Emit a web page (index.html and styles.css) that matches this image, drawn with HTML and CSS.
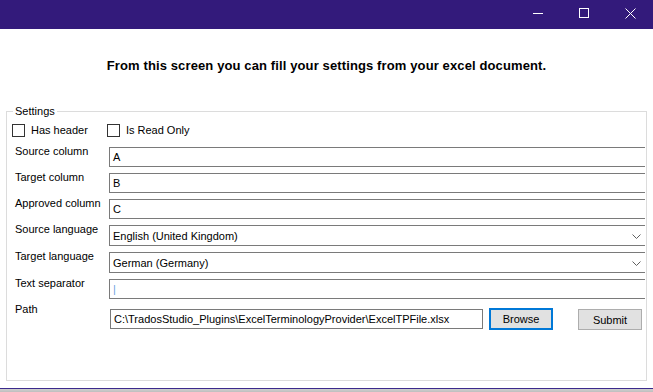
FILE: index.html
```html
<!DOCTYPE html>
<html>
<head>
<meta charset="utf-8">
<link rel="stylesheet" href="styles.css">
</head>
<body>
<div class="window">
  <div class="titlebar">
    <div class="cap-btn">
      <svg width="10" height="10" viewBox="0 0 10 10"><line x1="0" y1="5.5" x2="10" y2="5.5" stroke="#fff" stroke-width="1"/></svg>
    </div>
    <div class="cap-btn">
      <svg width="10" height="10" viewBox="0 0 10 10"><rect x="0.5" y="0.5" width="9" height="9" fill="none" stroke="#fff" stroke-width="1"/></svg>
    </div>
    <div class="cap-btn">
      <svg width="11" height="11" viewBox="0 0 11 11"><path d="M0.5 0.5 L10.5 10.5 M10.5 0.5 L0.5 10.5" stroke="#fff" stroke-width="1" fill="none"/></svg>
    </div>
  </div>
  <main class="content">
    <h1 class="heading">From this screen you can fill your settings from your excel document.</h1>
    <fieldset class="group">
      <legend class="legend">Settings</legend>
      <div class="checks">
        <label class="check"><span class="box"></span><span>Has header</span></label>
        <label class="check check-second"><span class="box"></span><span>Is Read Only</span></label>
      </div>
      <div class="row">
        <span class="label">Source column</span>
        <div class="field">A</div>
      </div>
      <div class="row">
        <span class="label">Target column</span>
        <div class="field">B</div>
      </div>
      <div class="row">
        <span class="label">Approved column</span>
        <div class="field">C</div>
      </div>
      <div class="row">
        <span class="label">Source language</span>
        <div class="field combo"><span>English (United Kingdom)</span>
          <svg class="chev" width="9" height="5" viewBox="0 0 9 5"><path d="M0.5 0.5 L4.5 4.5 L8.5 0.5" stroke="#606060" fill="none" stroke-width="1"/></svg>
        </div>
      </div>
      <div class="row">
        <span class="label">Target language</span>
        <div class="field combo"><span>German (Germany)</span>
          <svg class="chev" width="9" height="5" viewBox="0 0 9 5"><path d="M0.5 0.5 L4.5 4.5 L8.5 0.5" stroke="#606060" fill="none" stroke-width="1"/></svg>
        </div>
      </div>
      <div class="row">
        <span class="label">Text separator</span>
        <div class="field"><span class="sep">|</span></div>
      </div>
      <div class="row row-path">
        <span class="label label-path">Path</span>
        <div class="path">C:\TradosStudio_Plugins\ExcelTerminologyProvider\ExcelTPFile.xlsx</div>
        <button class="btn btn-focus">Browse</button>
        <button class="btn btn-submit">Submit</button>
      </div>
    </fieldset>
  </main>
  <div class="taskbar"></div>
</div>
</body>
</html>
```
FILE: styles.css
```css
* { box-sizing: border-box; }
html, body { margin: 0; padding: 0; background: #fff; }
body {
  font-family: "Liberation Sans", Arial, sans-serif;
  font-size: 11px;
  color: #000;
}
.window {
  width: 653px;
  height: 392px;
  display: flex;
  flex-direction: column;
  overflow: hidden;
}
.titlebar {
  height: 29px;
  flex: none;
  background: #331a7b;
  display: flex;
  justify-content: flex-end;
}
.cap-btn {
  width: 46px;
  height: 29px;
  display: flex;
  justify-content: center;
  align-items: flex-start;
  padding-top: 8px;
}
.cap-btn svg { display: block; }
.content {
  flex: 1;
  display: flex;
  flex-direction: column;
}
.heading {
  margin: 29px 0 0;
  font-size: 13px;
  line-height: 16px;
  font-weight: bold;
  text-align: center;
  letter-spacing: 0.12px;
}
.group {
  margin: 31px 6px 0 6px;
  border: 1px solid #dcdcdc;
  padding: 0 1px 50px 8px;
  min-width: 0;
}
.legend {
  margin-left: -2px;
  padding: 0 2px;
  font-size: 11px;
  line-height: 12px;
}
.checks {
  display: flex;
  align-items: center;
  margin-top: 7px;
  margin-left: -3px;
  height: 13px;
}
.check {
  display: flex;
  align-items: center;
  gap: 6px;
  font-size: 11px;
  line-height: 13px;
}
.check-second { margin-left: 19px; }
.box {
  width: 13px;
  height: 13px;
  border: 1px solid #333;
  background: #fff;
  display: block;
}
.row {
  display: flex;
  align-items: flex-start;
  margin-top: 6px;
}
.checks + .row { margin-top: 10px; }
.label {
  width: 94px;
  flex: none;
  line-height: 13px;
  margin-top: -2px;
}
.label-path { margin-top: -5px; }
.field {
  flex: 1;
  height: 20px;
  border: 1px solid #7a7a7a;
  border-right: none;
  padding-left: 3px;
  line-height: 18px;
  font-size: 11px;
  display: flex;
  align-items: center;
}
.combo { height: 21px; justify-content: space-between; padding-right: 4px; }
.chev { display: block; margin-top: 1px; }
.sep { color: #6ea2e0; }
.row-path { margin-top: 9px; align-items: flex-start; }
.path {
  width: 373px;
  height: 20px;
  margin-left: 1px;
  margin-top: 1px;
  border: 1px solid #7a7a7a;
  padding-left: 3px;
  line-height: 18px;
  white-space: nowrap;
  overflow: hidden;
}
.btn {
  font-family: "Liberation Sans", Arial, sans-serif;
  font-size: 11px;
  color: #000;
  background: #e1e1e1;
  width: 64px;
  height: 22px;
  padding: 0;
  text-align: center;
}
.btn-focus {
  margin-left: 6px;
  border: 2px solid #0078d7;
}
.btn-submit {
  margin-left: 25px;
  margin-top: 1px;
  height: 21px;
  border: 1px solid #adadad;
}
.taskbar {
  flex: none;
  height: 5px;
  margin-top: 7px;
  border-top: 1px solid #3b2a8c;
  background: linear-gradient(#d0d0d0, #b8b8b8);
}
```
